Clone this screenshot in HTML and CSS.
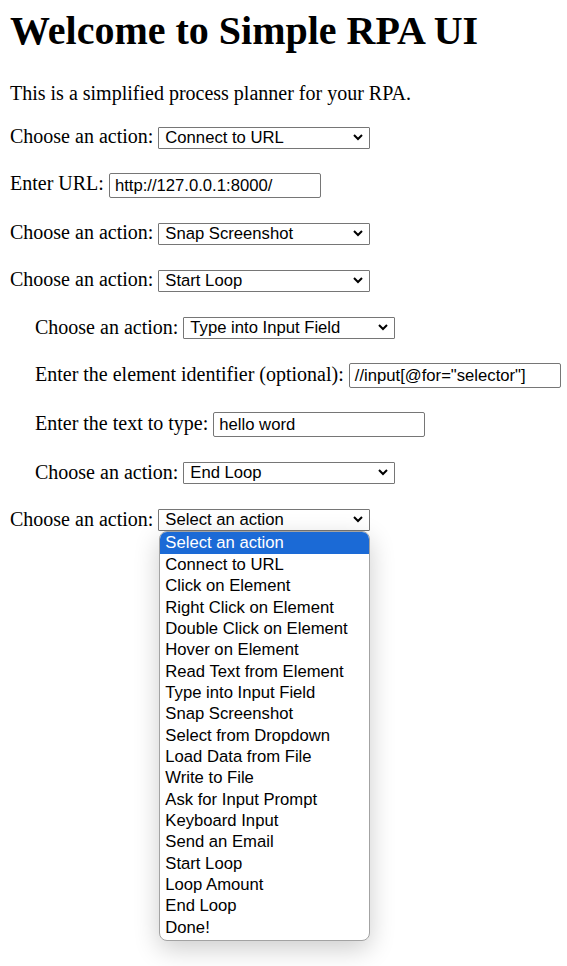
FILE: index.html
```html
<!DOCTYPE html>
<html lang="en">
<head>
<meta charset="utf-8">
<title>Simple RPA UI</title>
<link rel="stylesheet" href="styles.css">
</head>
<body>
<h1 class="title">Welcome to Simple RPA UI</h1>
<p class="intro">This is a simplified process planner for your RPA.</p>

<div class="row"><span class="lbl">Choose an action:</span> <span class="sel"><span class="sel-text">Connect to URL</span><svg class="chev" viewBox="0 0 10 6"><path d="M1 1 L5 5 L9 1"/></svg></span></div>

<div class="row"><span class="lbl">Enter URL:</span> <span class="inp">http://127.0.0.1:8000/</span></div>

<div class="row"><span class="lbl">Choose an action:</span> <span class="sel"><span class="sel-text">Snap Screenshot</span><svg class="chev" viewBox="0 0 10 6"><path d="M1 1 L5 5 L9 1"/></svg></span></div>

<div class="row"><span class="lbl">Choose an action:</span> <span class="sel"><span class="sel-text">Start Loop</span><svg class="chev" viewBox="0 0 10 6"><path d="M1 1 L5 5 L9 1"/></svg></span></div>

<div class="row indent"><span class="lbl">Choose an action:</span> <span class="sel"><span class="sel-text">Type into Input Field</span><svg class="chev" viewBox="0 0 10 6"><path d="M1 1 L5 5 L9 1"/></svg></span></div>

<div class="row indent"><span class="lbl">Enter the element identifier (optional):</span> <span class="inp">//input[@for="selector"]</span></div>

<div class="row indent"><span class="lbl">Enter the text to type:</span> <span class="inp">hello word</span></div>

<div class="row indent"><span class="lbl">Choose an action:</span> <span class="sel"><span class="sel-text">End Loop</span><svg class="chev" viewBox="0 0 10 6"><path d="M1 1 L5 5 L9 1"/></svg></span></div>

<div class="row"><span class="lbl">Choose an action:</span> <span class="sel open"><span class="sel-text">Select an action</span><svg class="chev" viewBox="0 0 10 6"><path d="M1 1 L5 5 L9 1"/></svg>
<span class="popup">
<span class="opt active">Select an action</span>
<span class="opt">Connect to URL</span>
<span class="opt">Click on Element</span>
<span class="opt">Right Click on Element</span>
<span class="opt">Double Click on Element</span>
<span class="opt">Hover on Element</span>
<span class="opt">Read Text from Element</span>
<span class="opt">Type into Input Field</span>
<span class="opt">Snap Screenshot</span>
<span class="opt">Select from Dropdown</span>
<span class="opt">Load Data from File</span>
<span class="opt">Write to File</span>
<span class="opt">Ask for Input Prompt</span>
<span class="opt">Keyboard Input</span>
<span class="opt">Send an Email</span>
<span class="opt">Start Loop</span>
<span class="opt">Loop Amount</span>
<span class="opt">End Loop</span>
<span class="opt">Done!</span>
</span></span></div>
</body>
</html>
```
FILE: styles.css
```css
html, body {
  background: #ffffff;
}
body {
  margin: 0;
  padding: 8px 0 0 10px;
  min-height: 958px;
  font-family: "Liberation Serif", "Times New Roman", serif;
  font-size: 20px;
  color: #000;
}
.title {
  font-size: 40px;
  font-weight: bold;
  margin: 0 0 27.8px;
  line-height: 46px;
}
.intro {
  margin: 0;
}
.row {
  margin: 20px 0;
  white-space: nowrap;
}
.intro + .row {
  margin-top: 18.3px;
}
.indent {
  margin-left: 25px;
}
.sel {
  position: relative;
  display: inline-block;
  vertical-align: baseline;
  box-sizing: border-box;
  width: 212px;
  height: 22px;
  margin: 3.5px 0 1.7px;
  border: 1px solid #767676;
  border-radius: 1px;
  background: #fff;
  font-family: "Liberation Sans", Arial, sans-serif;
  font-size: 16.67px;
  line-height: 20.44px;
  padding: 0 0 0 6px;
  text-align: left;
}
.chev {
  position: absolute;
  right: 6px;
  top: 6px;
  width: 10px;
  height: 6px;
  fill: none;
  stroke: #000;
  stroke-width: 2;
  overflow: visible;
}
.inp {
  display: inline-block;
  vertical-align: baseline;
  box-sizing: border-box;
  width: 212px;
  height: 25px;
  margin: 2.3px 0 1.7px;
  border: 1px solid #767676;
  border-radius: 2px;
  font-family: "Liberation Sans", Arial, sans-serif;
  font-size: 16.67px;
  line-height: 23.84px;
  padding-left: 5px;
}
.popup {
  position: absolute;
  left: 0;
  top: 21px;
  width: 211px;
  box-sizing: border-box;
  border: 1px solid #a3a3a3;
  border-radius: 8px;
  background: #fff;
  box-shadow: 0 8px 26px rgba(0, 0, 0, 0.2);
  display: block;
  padding: 0 0 2px;
  z-index: 5;
  line-height: normal;
}
.opt {
  display: block;
  line-height: 21.35px;
  height: 21.35px;
  padding-left: 5px;
  color: #000;
}
.opt.active {
  background: #1b6ad6;
  color: #fff;
  border-radius: 7px 7px 0 0;
}
```
